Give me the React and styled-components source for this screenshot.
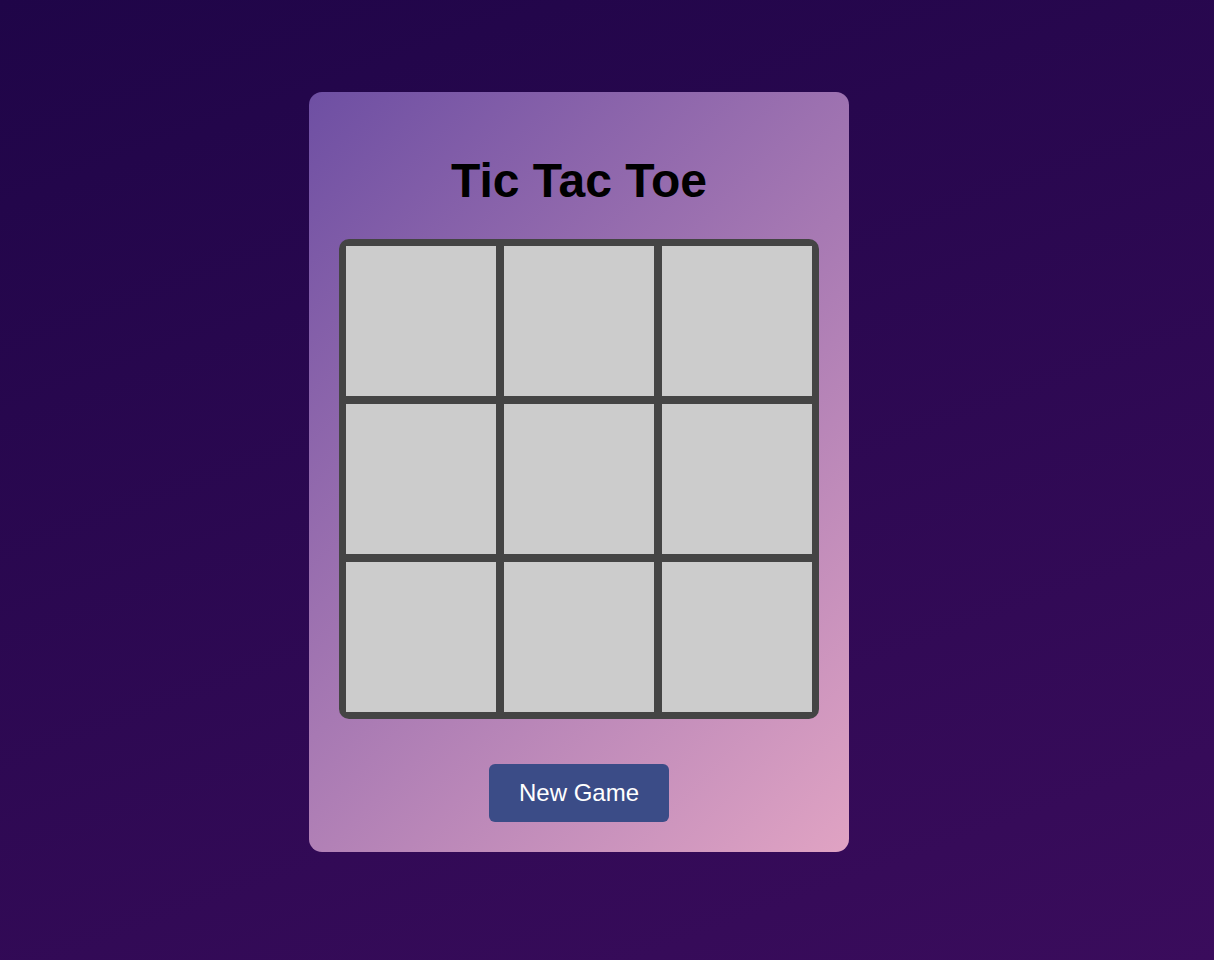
import React from "react";
import styled, { createGlobalStyle } from "styled-components";

const GlobalStyle = createGlobalStyle`
  html, body {
    margin: 0;
    padding: 0;
  }
  body {
    font-family: "Liberation Sans", Arial, sans-serif;
    background: #2a0852;
  }
`;

const Page = styled.div`
  min-height: 960px;
  box-sizing: border-box;
  padding: 92px 0 0 309px;
  background: linear-gradient(160deg, #1f0548 0%, #3a0c5c 100%);
`;

const Card = styled.div`
  width: 540px;
  height: 760px;
  box-sizing: border-box;
  padding: 30px;
  border-radius: 13px;
  background: linear-gradient(135deg, #6e4fa3 0%, #e0a3c3 100%);
  display: flex;
  flex-direction: column;
  align-items: center;
`;

const Title = styled.h1`
  margin: 31px 0 30px;
  font-size: 48px;
  line-height: 56px;
  font-weight: 700;
  color: #000;
`;

const Board = styled.div`
  width: 480px;
  height: 480px;
  box-sizing: border-box;
  padding: 7px;
  display: grid;
  grid-template-columns: repeat(3, 150px);
  grid-template-rows: repeat(3, 150px);
  gap: 8px;
  background: #444444;
  border-radius: 10px;
`;

const Cell = styled.button`
  border: none;
  padding: 0;
  margin: 0;
  background: #cccccc;
  font-family: inherit;
  font-size: 64px;
  font-weight: 700;
  cursor: pointer;
`;

const NewGameButton = styled.button`
  margin-top: 45px;
  padding: 15px 30px;
  border: none;
  border-radius: 6px;
  background: #3b4c87;
  color: #ffffff;
  font-family: "Liberation Sans", Arial, sans-serif;
  font-size: 24px;
  line-height: 27.6px;
  cursor: pointer;
`;

export default function App() {
  const cells = Array.from({ length: 9 }, (_, i) => i);
  return (
    <>
      <GlobalStyle />
      <Page>
        <Card>
          <Title>Tic Tac Toe</Title>
          <Board>
            {cells.map((i) => (
              <Cell key={i} aria-label={`cell ${i + 1}`} />
            ))}
          </Board>
          <NewGameButton>New Game</NewGameButton>
        </Card>
      </Page>
    </>
  );
}
